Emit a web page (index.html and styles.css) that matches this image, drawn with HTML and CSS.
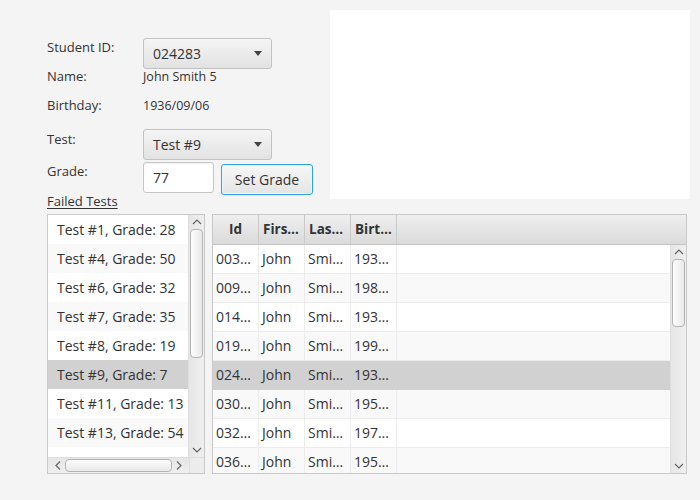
FILE: index.html
```html
<!DOCTYPE html>
<html>
<head>
<meta charset="utf-8">
<link rel="stylesheet" href="styles.css">
</head>
<body>
<div class="app">
  <div class="top">
    <div class="form">
      <div class="row r1"><span class="lbl">Student ID:</span><div class="combo"><span>024283</span><i class="arrow"></i></div></div>
      <div class="row r2"><span class="lbl">Name:</span><span class="val">John Smith 5</span></div>
      <div class="row r3"><span class="lbl">Birthday:</span><span class="val">1936/09/06</span></div>
      <div class="row r4"><span class="lbl">Test:</span><div class="combo"><span>Test #9</span><i class="arrow"></i></div></div>
      <div class="row r5"><span class="lbl">Grade:</span><div class="field">77</div><button class="btn">Set Grade</button></div>
      <div class="row r6"><span class="link">Failed Tests</span></div>
    </div>
    <div class="canvas"></div>
  </div>
  <div class="bottom">
    <div class="list">
      <div class="list-body">
        <div class="list-items">
          <div class="item">Test #1, Grade: 28</div>
          <div class="item odd">Test #4, Grade: 50</div>
          <div class="item">Test #6, Grade: 32</div>
          <div class="item odd">Test #7, Grade: 35</div>
          <div class="item">Test #8, Grade: 19</div>
          <div class="item sel">Test #9, Grade: 7</div>
          <div class="item">Test #11, Grade: 13</div>
          <div class="item odd">Test #13, Grade: 54</div>
          <div class="item"></div>
        </div>
        <div class="vbar">
          <svg class="arr" width="16" height="14" viewBox="0 0 16 14"><path d="M4 9 L8 5 L12 9" fill="none" stroke="#666" stroke-width="1.2"/></svg>
          <div class="vthumb list-thumb"></div>
          <div class="vspace"></div>
          <svg class="arr" width="16" height="14" viewBox="0 0 16 14"><path d="M4 5 L8 9 L12 5" fill="none" stroke="#666" stroke-width="1.2"/></svg>
        </div>
      </div>
      <div class="hrow">
        <div class="hbar">
          <svg class="arr" width="14" height="15" viewBox="0 0 14 15"><path d="M9 3.5 L5 7.5 L9 11.5" fill="none" stroke="#666" stroke-width="1.2"/></svg>
          <div class="hthumb"></div>
          <div class="hspace"></div>
          <svg class="arr" width="14" height="15" viewBox="0 0 14 15"><path d="M5 3.5 L9 7.5 L5 11.5" fill="none" stroke="#666" stroke-width="1.2"/></svg>
        </div>
        <div class="corner"></div>
      </div>
    </div>
    <div class="table">
      <div class="thead">
        <div class="th c">Id</div>
        <div class="th">Firs…</div>
        <div class="th">Las…</div>
        <div class="th">Birt…</div>
        <div class="th fill"></div>
      </div>
      <div class="tbody">
        <div class="rows">
          <div class="tr"><div class="td">003…</div><div class="td">John</div><div class="td">Smi…</div><div class="td">193…</div></div>
          <div class="tr odd"><div class="td">009…</div><div class="td">John</div><div class="td">Smi…</div><div class="td">198…</div></div>
          <div class="tr"><div class="td">014…</div><div class="td">John</div><div class="td">Smi…</div><div class="td">193…</div></div>
          <div class="tr odd"><div class="td">019…</div><div class="td">John</div><div class="td">Smi…</div><div class="td">199…</div></div>
          <div class="tr sel"><div class="td">024…</div><div class="td">John</div><div class="td">Smi…</div><div class="td">193…</div></div>
          <div class="tr odd"><div class="td">030…</div><div class="td">John</div><div class="td">Smi…</div><div class="td">195…</div></div>
          <div class="tr"><div class="td">032…</div><div class="td">John</div><div class="td">Smi…</div><div class="td">197…</div></div>
          <div class="tr odd"><div class="td">036…</div><div class="td">John</div><div class="td">Smi…</div><div class="td">195…</div></div>
        </div>
        <div class="vbar tbar">
          <svg class="arr" width="16" height="14" viewBox="0 0 16 14"><path d="M4 9 L8 5 L12 9" fill="none" stroke="#666" stroke-width="1.2"/></svg>
          <div class="vthumb table-thumb"></div>
          <div class="vspace"></div>
          <svg class="arr" width="16" height="14" viewBox="0 0 16 14"><path d="M4 5 L8 9 L12 5" fill="none" stroke="#666" stroke-width="1.2"/></svg>
        </div>
      </div>
    </div>
  </div>
</div>
</body>
</html>
```
FILE: styles.css
```css
* { box-sizing: border-box; }
html, body { margin: 0; padding: 0; }
body {
  width: 700px; height: 500px; overflow: hidden;
  background: #f4f4f4;
  font-family: "Open Sans", "Noto Sans", sans-serif;
  color: #333;
}
.app { display: flex; flex-direction: column; }
.top { display: flex; align-items: flex-start; padding: 10px 10px 0 47px; }
.form { width: 283px; margin-top: 28px; display: flex; flex-direction: column; }
.row { display: flex; align-items: flex-start; }
.lbl { width: 96px; font-size: 13px; line-height: 17px; }
.val { font-size: 12.5px; line-height: 17px; }
.r1 { height: 30px; }
.r1 .lbl { margin-top: 1px; }
.r2 { height: 29px; }
.r3 { height: 32px; }
.r4 { height: 30px; }
.r4 .lbl { margin-top: 2px; }
.r5 { height: 34px; }
.r5 .lbl { margin-top: 4px; }
.r6 { height: 17px; }
.link { font-size: 13px; line-height: 17px; text-decoration: underline; text-underline-offset: 2px; }
.combo {
  width: 129px; height: 31px;
  border: 1px solid #c2c2c2; border-radius: 3px;
  background: linear-gradient(#f5f5f5, #e2e2e2);
  display: flex; align-items: center; justify-content: space-between;
  padding: 0 9px 0 9px;
  font-size: 14px;
}
.arrow {
  width: 0; height: 0;
  border-left: 4.5px solid transparent; border-right: 4.5px solid transparent;
  border-top: 5px solid #444;
}
.field {
  width: 71px; height: 31px; margin-top: 3px;
  background: #fff; border: 1px solid #c6c6c6; border-radius: 3px;
  box-shadow: inset 0 1px 1px rgba(0,0,0,0.05);
  font-size: 14px; line-height: 29px; padding-left: 9px;
}
.btn {
  width: 92px; height: 31px; margin: 5px 0 0 7px;
  border: 1px solid #2ea7db; border-radius: 3px;
  background: linear-gradient(#f7f7f7, #e4e4e4);
  box-shadow: inset 0 0 0 1px #eaf6fb;
  font-family: inherit; font-size: 14px; color: #333;
  padding: 0;
}
.canvas { width: 360px; height: 189px; background: #fff; }

.bottom { display: flex; gap: 7px; padding-left: 47px; margin-top: 4px; }
.list {
  width: 158px; height: 260px;
  border: 1px solid #c8c8c8; background: #fff;
  display: flex; flex-direction: column;
}
.list-body { flex: 1; display: flex; min-height: 0; }
.list-items { flex: 1; overflow: hidden; }
.item { height: 29px; line-height: 29px; padding-left: 9px; font-size: 14px; white-space: nowrap; background: #fff; }
.item.odd { background: #f9f9f9; }
.item.sel { background: #d1d1d1; }
.vbar {
  width: 16px; display: flex; flex-direction: column; align-items: center;
  background: linear-gradient(90deg, #e6e6e6, #efefef);
  border-left: 1px solid #dedede;
}
.arr { flex: none; display: block; }
.vthumb {
  width: 13px; flex: none;
  border: 1px solid #b4b4b4; border-radius: 4px;
  background: linear-gradient(90deg, #fdfdfd, #e9e9e9);
}
.list-thumb { height: 129px; }
.vspace { flex: 1; }
.hrow { height: 16px; display: flex; }
.hbar {
  flex: 1; display: flex; align-items: center;
  background: linear-gradient(#e6e6e6, #efefef);
  border-top: 1px solid #dedede; padding: 0 3px;
}
.hthumb {
  width: 107px; height: 13px;
  border: 1px solid #b4b4b4; border-radius: 4px;
  background: linear-gradient(#fdfdfd, #e9e9e9);
}
.hspace { flex: 1; }
.corner { width: 16px; background: #ececec; border-top: 1px solid #dedede; border-left: 1px solid #dedede; }

.table {
  width: 475px; height: 260px;
  border: 1px solid #c8c8c8; background: #fff;
  display: flex; flex-direction: column;
}
.thead {
  height: 30px; flex: none; display: flex;
  background: linear-gradient(#efefef, #dadada);
  border-bottom: 1px solid #c4c4c4;
}
.th {
  width: 46px; border-right: 1px solid #c9c9c9;
  font-weight: bold; font-size: 13.5px; line-height: 29px;
  padding-left: 4px; white-space: nowrap; overflow: hidden;
}
.th.c { text-align: center; padding-left: 0; }
.th.fill { flex: 1; border-right: none; }
.tbody { flex: 1; display: flex; min-height: 0; }
.rows { flex: 1; overflow: hidden; }
.tr { height: 29px; display: flex; background: #fff; border-bottom: 1px solid #ececec; }
.tr.odd { background: #f9f9f9; }
.tr.sel { background: #d1d1d1; border-bottom-color: #d1d1d1; }
.td {
  width: 46px; border-right: 1px solid #ececec;
  font-size: 14px; line-height: 28px; padding-left: 3px; white-space: nowrap; overflow: hidden;
}
.tr.sel .td { border-right-color: #d1d1d1; }
.tbar { border-left: 1px solid #dedede; }
.table-thumb { height: 68px; }
```
